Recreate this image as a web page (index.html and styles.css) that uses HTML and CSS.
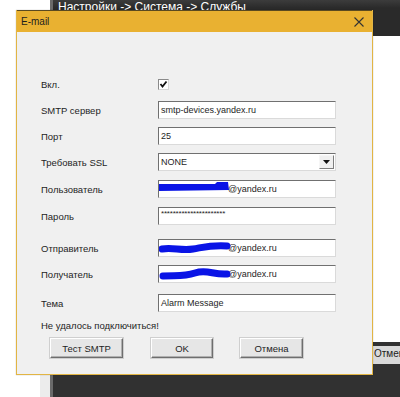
FILE: index.html
```html
<!DOCTYPE html>
<html lang="ru">
<head>
  <meta charset="UTF-8">
  <title>E-mail</title>
  <link rel="stylesheet" href="styles.css">
</head>
<body>

  <!-- Window behind the dialog -->
  <div class="back-window">
    <div class="back-title">Настройки -&gt; Система -&gt; Службы</div>
    <div class="back-content"></div>
    <div class="back-buttons"><span class="back-btn">Отмена</span></div>
  </div>
  <div class="back-edge"></div>

  <!-- E-mail dialog -->
  <div class="dialog">
    <div class="dialog-title">
      <span>E-mail</span>
      <svg class="close" width="10" height="10" viewBox="0 0 10 10">
        <path d="M0.5 0.5 L9.5 9.5 M9.5 0.5 L0.5 9.5" stroke="#333" stroke-width="1.1" fill="none"/>
      </svg>
    </div>

    <div class="dialog-body">
      <div class="row row-check">
        <label>Вкл.</label>
        <span class="check">
          <svg width="9" height="9" viewBox="0 0 9 9">
            <path d="M1.5 4 L3.5 6.5 L7.5 1.5" stroke="#111" stroke-width="1.8" fill="none"/>
          </svg>
        </span>
      </div>

      <div class="row">
        <label>SMTP сервер</label>
        <div class="field">smtp-devices.yandex.ru</div>
      </div>

      <div class="row">
        <label>Порт</label>
        <div class="field">25</div>
      </div>

      <div class="row">
        <label>Требовать SSL</label>
        <div class="field select">
          <span>NONE</span>
          <span class="select-btn">
            <svg width="7" height="4" viewBox="0 0 7 4"><path d="M0 0 H7 L3.5 4 Z" fill="#111"/></svg>
          </span>
        </div>
      </div>

      <div class="row gap-9">
        <label>Пользователь</label>
        <div class="field masked">
          <svg class="scribble" width="72" height="14" viewBox="0 0 72 14">
            <path d="M0 3 L56 3 L58 1 L69 1 L70 9 L0 10 Z" fill="#0a14e6"/>
          </svg>
          @yandex.ru
        </div>
      </div>

      <div class="row gap-9">
        <label>Пароль</label>
        <div class="field password">**********************</div>
      </div>

      <div class="row gap-14">
        <label>Отправитель</label>
        <div class="field masked">
          <svg class="scribble" width="72" height="16" viewBox="0 0 72 16">
            <path d="M3 9 C14 7 22 11 34 9 S52 5 68 6" stroke="#0a14e6" stroke-width="7" stroke-linecap="round" fill="none"/>
          </svg>
          @yandex.ru
        </div>
      </div>

      <div class="row">
        <label>Получатель</label>
        <div class="field masked">
          <svg class="scribble" width="72" height="16" viewBox="0 0 72 16">
            <path d="M4 10 C16 9 24 11 36 7 S54 9 68 8" stroke="#0a14e6" stroke-width="7" stroke-linecap="round" fill="none"/>
          </svg>
          @yandex.ru
        </div>
      </div>

      <div class="row gap-11">
        <label>Тема</label>
        <div class="field">Alarm Message</div>
      </div>

      <div class="status">Не удалось подключиться!</div>

      <div class="buttons">
        <button class="btn btn-test">Тест SMTP</button>
        <button class="btn btn-ok">OK</button>
        <button class="btn btn-cancel">Отмена</button>
      </div>
    </div>
  </div>

</body>
</html>
```

FILE: styles.css
```css
/* E-mail settings dialog */
body {
  margin: 0;
  width: 400px;
  height: 397px;
  position: relative;
  overflow: hidden;
  background-color: #ffffff;
  font-family: 'Liberation Sans', Arial, sans-serif;
  color: #1e1e1e;
}

/* Window behind */
.back-window {
  position: absolute;
  left: 50px;
  top: 0;
  right: 0;
  bottom: 0;
  display: flex;
  flex-direction: column;
  background-color: #313131;
  border-left: 3px solid #6a6a6a;
}

.back-title {
  height: 36px;
  padding-left: 5px;
  font-size: 12px;
  line-height: 14px;
  padding-top: 0;
  color: #ffffff;
  background: linear-gradient(#3c3c3c, #2a2a2a 8px);
}

.back-content {
  height: 306px;
  margin-left: 12px;
  background-color: #ffffff;
}

.back-buttons {
  padding-top: 4px;
  padding-left: 310px;
}

.back-btn {
  display: block;
  height: 18px;
  padding-left: 11px;
  background-color: #d9d9d9;
  font-size: 10px;
  line-height: 16px;
  color: #222;
}

.back-edge {
  position: absolute;
  left: 40px;
  top: 375px;
  width: 10px;
  height: 22px;
  background-color: #ececec;
}

/* Dialog */
.dialog {
  position: absolute;
  left: 16px;
  top: 10px;
  width: 357px;
  height: 365px;
  box-sizing: border-box;
  border: 1px solid #e2b544;
  border-top: none;
  background-color: #f0f0f0;
  box-shadow: 0 0 1px rgba(0,0,0,0.3);
}

.dialog-title {
  height: 22px;
  display: flex;
  align-items: center;
  justify-content: space-between;
  padding: 0 8px 0 4px;
  background-color: #e9b131;
  border-top: 1px solid #5a4a20;
  box-sizing: border-box;
  font-size: 10px;
  color: #1e1e1e;
}

.dialog-body {
  padding-top: 46px;
  display: flex;
  flex-direction: column;
}

.row {
  display: flex;
  align-items: center;
  height: 18px;
  margin-top: 8px;
}

.row.gap-9 { margin-top: 9px; }
.row.gap-11 { margin-top: 11px; }
.row.gap-14 { margin-top: 14px; }

.row-check {
  height: 13px;
  margin-top: 0;
  margin-bottom: 2px;
}

.row label {
  width: 117px;
  padding-left: 24px;
  font-size: 9.5px;
  flex-shrink: 0;
}

.check {
  width: 11px;
  height: 11px;
  box-sizing: border-box;
  border: 1px solid #8a8a8a;
  border-right-color: #d8d8d8;
  border-bottom-color: #d8d8d8;
  background-color: #ffffff;
  display: flex;
  align-items: center;
  justify-content: center;
}

.field {
  position: relative;
  width: 178px;
  height: 18px;
  box-sizing: border-box;
  border: 1px solid #dadada;
  border-top-color: #707070;
  border-left-color: #707070;
  background-color: #ffffff;
  padding-left: 2px;
  font-size: 9px;
  line-height: 16px;
  color: #1e1e1e;
  white-space: nowrap;
}

.select {
  display: flex;
  align-items: center;
  justify-content: space-between;
  padding-right: 1px;
}

.select-btn {
  width: 15px;
  height: 14px;
  box-sizing: border-box;
  border: 1px solid #7e7e7e;
  border-top-color: #f6f6f6;
  border-left-color: #f6f6f6;
  background-color: #f0f0f0;
  display: flex;
  align-items: center;
  justify-content: center;
}

.masked {
  padding-left: 69px;
}

.scribble {
  position: absolute;
  left: 0;
  top: 0;
}

.password {
  font-size: 8px;
  line-height: 12px;
  letter-spacing: -0.2px;
}

.status {
  margin-top: 8px;
  padding-left: 24px;
  font-size: 9.5px;
  line-height: 12px;
}

.buttons {
  display: flex;
  gap: 28px;
  margin-top: 6px;
  padding-left: 33px;
}

.btn {
  height: 20px;
  padding: 0;
  font-family: 'Liberation Sans', Arial, sans-serif;
  font-size: 9.5px;
  color: #1e1e1e;
  background-color: #e6e6e6;
  border: 1px solid #6e6e6e;
  border-top-color: #ffffff;
  border-left-color: #ffffff;
  box-shadow: inset -1px -1px 0 #b0b0b0, 0 0 0 1px #cfcfcf;
}

.btn-test { width: 73px; }
.btn-ok { width: 62px; margin-right: -1px; }
.btn-cancel { width: 63px; }
```
